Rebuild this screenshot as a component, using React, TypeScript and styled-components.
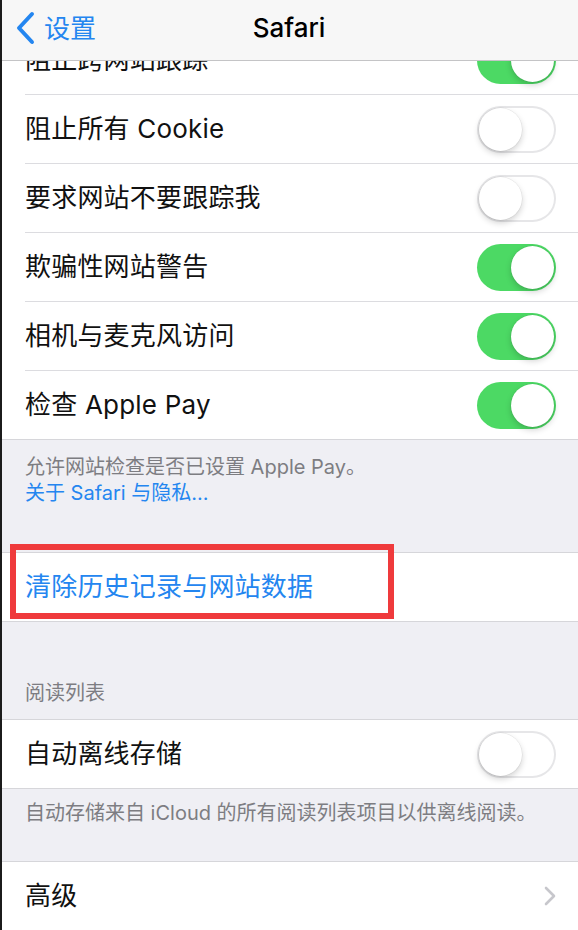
import React from "react";
import styled, { createGlobalStyle } from "styled-components";

const Global = createGlobalStyle`
  html, body { margin: 0; padding: 0; background: #1b1b1b; }
  body { font-family: "Inter", "Noto Sans CJK SC", sans-serif; -webkit-font-smoothing: antialiased; }
  * { box-sizing: border-box; }
`;

const Page = styled.div`
  position: relative;
  width: 578px;
  height: 930px;
  overflow: hidden;
  background: #efeff4;
  border-left: 2px solid #1b1b1b;
`;

const NavBar = styled.div`
  position: absolute;
  top: 0;
  left: 0;
  right: 0;
  height: 61px;
  background: #f7f7f7;
  border-bottom: 1px solid #c4c4c6;
  display: flex;
  align-items: center;
  justify-content: center;
  z-index: 2;
`;

const BackButton = styled.div`
  position: absolute;
  left: 12px;
  top: 0;
  height: 56px;
  display: flex;
  align-items: center;
  gap: 8px;
  color: #2486f0;
  font-size: 26px;
`;

const BackText = styled.span`
  margin-top: -4px;
`;

const Title = styled.div`
  font-size: 26px;
  font-weight: 500;
  color: #000;
  margin-top: -6px;
  margin-left: -2px;
`;

const Content = styled.div`
  padding-top: 26px;
  display: flex;
  flex-direction: column;
`;

const Group = styled.div<{ $top?: boolean }>`
  background: #fff;
  border-top: ${(p) => (p.$top ? "1px solid #d6d6da" : "none")};
  border-bottom: 1px solid #d6d6da;
  display: flex;
  flex-direction: column;
`;

const Row = styled.div`
  position: relative;
  height: 68px;
  display: flex;
  align-items: center;
  justify-content: space-between;
  padding: 0 22px 0 23px;
`;

const Label = styled.span<{ $link?: boolean }>`
  font-size: 26px;
  line-height: 1.2;
  padding-bottom: 1px;
  color: ${(p) => (p.$link ? "#2486f0" : "#111")};
  letter-spacing: 0.2px;
`;

const Separator = styled.div`
  height: 1px;
  margin-left: 23px;
  background: #dcdce0;
`;

const Footer = styled.div<{ $pt: number; $pb: number }>`
  padding: ${(p) => p.$pt}px 20px ${(p) => p.$pb}px 23px;
  font-size: 20px;
  line-height: 26px;
  color: #7d7d82;
`;

const FooterLink = styled.div`
  color: #2486f0;
`;

const Header = styled.div`
  margin-top: 58px;
  padding: 0 23px 13px;
  font-size: 20px;
  line-height: 26px;
  color: #7d7d82;
`;

const Spacer = styled.div<{ $h: number }>`
  height: ${(p) => p.$h}px;
`;

const Toggle = styled.div<{ $on?: boolean }>`
  position: relative;
  width: 79px;
  height: 47px;
  border-radius: 24px;
  background: ${(p) => (p.$on ? "#4cd964" : "#fff")};
  box-shadow: ${(p) => (p.$on ? "none" : "inset 0 0 0 2px #e6e6e8")};
  flex-shrink: 0;
`;

const Knob = styled.div<{ $on?: boolean }>`
  position: absolute;
  top: 2px;
  left: ${(p) => (p.$on ? "34px" : "2px")};
  width: 43px;
  height: 43px;
  border-radius: 50%;
  background: #fff;
  box-shadow: 0 3px 6px rgba(0, 0, 0, 0.18), 0 0 0 0.5px rgba(0, 0, 0, 0.08);
`;

const Highlight = styled.div`
  position: absolute;
  left: 8px;
  top: -9px;
  width: 384px;
  height: 75px;
  border: 6px solid #ef3a3c;
  pointer-events: none;
`;

const Switch = ({ on }: { on?: boolean }) => (
  <Toggle $on={on}>
    <Knob $on={on} />
  </Toggle>
);

const Chevron = () => (
  <svg width="12" height="20" viewBox="0 0 12 20">
    <polyline points="2,2 10,10 2,18" fill="none" stroke="#c7c7cc" strokeWidth="2.6" strokeLinecap="round" strokeLinejoin="round" />
  </svg>
);

const BackChevron = () => (
  <svg width="22" height="34" viewBox="0 0 22 34">
    <polyline points="18,3 5,17 18,31" fill="none" stroke="#2486f0" strokeWidth="4" strokeLinecap="round" strokeLinejoin="round" />
  </svg>
);

const privacyRows: { label: string; on: boolean }[] = [
  { label: "阻止跨网站跟踪", on: true },
  { label: "阻止所有 Cookie", on: false },
  { label: "要求网站不要跟踪我", on: false },
  { label: "欺骗性网站警告", on: true },
  { label: "相机与麦克风访问", on: true },
  { label: "检查 Apple Pay", on: true },
];

export default function App() {
  return (
    <>
      <Global />
      <Page>
        <NavBar>
          <BackButton>
            <BackChevron />
            <BackText>设置</BackText>
          </BackButton>
          <Title>Safari</Title>
        </NavBar>
        <Content>
          <Group>
            {privacyRows.map((r, i) => (
              <React.Fragment key={r.label}>
                {i > 0 && <Separator />}
                <Row>
                  <Label>{r.label}</Label>
                  <Switch on={r.on} />
                </Row>
              </React.Fragment>
            ))}
          </Group>
          <Footer $pt={14} $pb={0}>
            允许网站检查是否已设置 Apple Pay。
            <FooterLink>关于 Safari 与隐私...</FooterLink>
          </Footer>
          <Spacer $h={46} />
          <Group $top>
            <Row>
              <Label $link>清除历史记录与网站数据</Label>
              <Highlight />
            </Row>
          </Group>
          <Header>阅读列表</Header>
          <Group $top>
            <Row>
              <Label>自动离线存储</Label>
              <Switch />
            </Row>
          </Group>
          <Footer $pt={11} $pb={35}>
            自动存储来自 iCloud 的所有阅读列表项目以供离线阅读。
          </Footer>
          <Group $top>
            <Row>
              <Label>高级</Label>
              <Chevron />
            </Row>
          </Group>
        </Content>
      </Page>
    </>
  );
}
